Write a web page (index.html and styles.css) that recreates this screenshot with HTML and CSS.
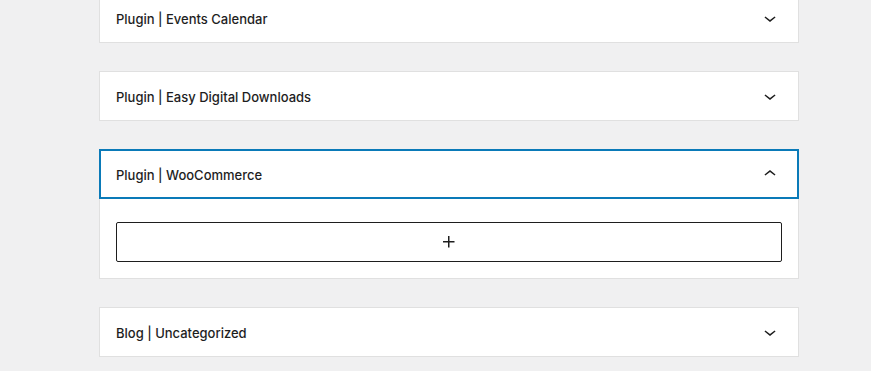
FILE: index.html
```html
<!DOCTYPE html>
<html>
<head>
<meta charset="utf-8">
<link rel="stylesheet" href="styles.css">
</head>
<body>
<div class="list">
  <div class="panel">
    <div class="head"><span class="title">Plugin | Events Calendar</span>
      <svg class="chev" viewBox="0 0 24 24" width="24" height="24"><path d="M17.5 11.6L12 16l-5.5-4.4.9-1.2L12 14l4.6-3.6 1 1.2z"/></svg>
    </div>
  </div>
  <div class="panel">
    <div class="head"><span class="title">Plugin | Easy Digital Downloads</span>
      <svg class="chev" viewBox="0 0 24 24" width="24" height="24"><path d="M17.5 11.6L12 16l-5.5-4.4.9-1.2L12 14l4.6-3.6 1 1.2z"/></svg>
    </div>
  </div>
  <div class="panel open">
    <div class="head focus"><span class="title">Plugin | WooCommerce</span>
      <svg class="chev" viewBox="0 0 24 24" width="24" height="24"><path d="M6.5 12.4L12 8l5.5 4.4-.9 1.2L12 10l-4.6 3.6-1-1.2z"/></svg>
    </div>
    <div class="body">
      <div class="add">
        <svg viewBox="0 0 24 24" width="24" height="24"><path d="M11 12.5V17.5H12.5V12.5H17.5V11H12.5V6H11V11H6V12.5H11Z"/></svg>
      </div>
    </div>
  </div>
  <div class="panel">
    <div class="head"><span class="title">Blog | Uncategorized</span>
      <svg class="chev" viewBox="0 0 24 24" width="24" height="24"><path d="M17.5 11.6L12 16l-5.5-4.4.9-1.2L12 14l4.6-3.6 1 1.2z"/></svg>
    </div>
  </div>
</div>
</body>
</html>
```
FILE: styles.css
```css
html, body {
  margin: 0;
  padding: 0;
  background: #f0f0f1;
  overflow: hidden;
}
body {
  font-family: Inter, "Noto Sans", "Liberation Sans", sans-serif;
  color: #1e1e1e;
}
.list {
  width: 700px;
  margin: -7px 0 0 99px;
  display: flex;
  flex-direction: column;
  gap: 28px;
}
.panel {
  background: #fff;
  border: 1px solid #e0e0e0;
}
.head {
  height: 48px;
  padding: 0 16px;
  display: flex;
  align-items: center;
  justify-content: space-between;
  box-sizing: border-box;
}
.head.focus {
  outline: 2px solid #0a7ab8;
  outline-offset: -1px;
}
.title {
  font-size: 13px;
  font-weight: 500;
  line-height: 16px;
  padding-top: 1px;
}
.chev {
  fill: #1e1e1e;
  display: block;
}
.body {
  padding: 24px 16px 16px;
}
.add {
  height: 40px;
  box-sizing: border-box;
  border: 1px solid #1e1e1e;
  border-radius: 2px;
  display: flex;
  align-items: center;
  justify-content: center;
}
.add svg {
  fill: #1e1e1e;
  display: block;
}
```
